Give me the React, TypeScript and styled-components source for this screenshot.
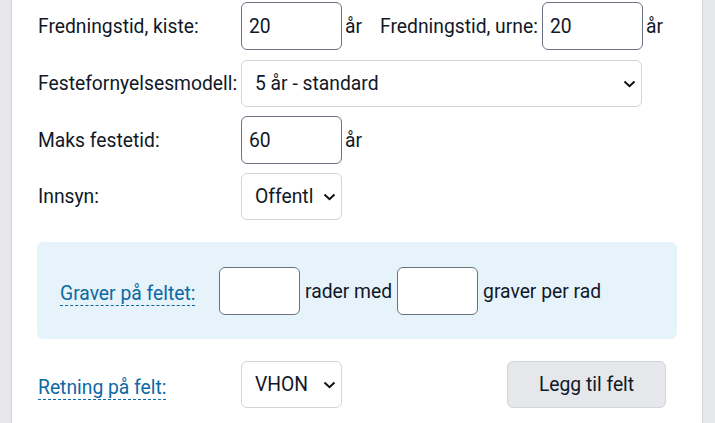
import React from 'react';
import styled, { createGlobalStyle } from 'styled-components';

const GlobalStyle = createGlobalStyle`
  html, body {
    margin: 0;
    padding: 0;
    background: #e5e7eb;
    font-family: Roboto, "Liberation Sans", Arial, sans-serif;
    color: #111827;
  }
`;

const Panel = styled.div`
  margin-left: 11px;
  width: 692px;
  min-height: 423px;
  box-sizing: border-box;
  background: #ffffff;
  border-left: 1px solid #d1d5db;
  border-right: 1px solid #d1d5db;
  padding: 2px 0 0 26px;
  font-size: 19.3px;
`;

const Row = styled.div<{ $gap?: number }>`
  display: flex;
  align-items: center;
  margin-bottom: ${(p) => p.$gap ?? 9}px;
`;

const Label = styled.label<{ $width?: number }>`
  width: ${(p) => p.$width ?? 203}px;
  flex-shrink: 0;
  white-space: nowrap;
`;

const HelpLabel = styled.span`
  color: #0b69a3;
  border-bottom: 1px dashed #0b69a3;
  line-height: 1.2;
  white-space: nowrap;
`;

const HelpCell = styled.div<{ $width: number }>`
  width: ${(p) => p.$width}px;
  flex-shrink: 0;
  padding-top: 6px;
`;

const Input = styled.input<{ $width?: number }>`
  width: ${(p) => p.$width ?? 101}px;
  height: 48px;
  box-sizing: border-box;
  border: 1px solid #6b7280;
  border-radius: 6px;
  padding: 0 7px;
  font: inherit;
  color: #111827;
  background: #fff;
  outline: none;
`;

const Unit = styled.span<{ $after?: number }>`
  margin-left: 3px;
  margin-right: ${(p) => p.$after ?? 0}px;
`;

const SelectWrap = styled.div<{ $width: number }>`
  position: relative;
  width: ${(p) => p.$width}px;
  height: 47px;
`;

const Select = styled.select`
  width: 100%;
  height: 100%;
  box-sizing: border-box;
  appearance: none;
  border: 1px solid #d1d5db;
  border-radius: 6px;
  padding: 0 27px 0 13px;
  font: inherit;
  color: #111827;
  background: #fff;
  outline: none;
`;

const Chevron = styled.svg`
  position: absolute;
  right: 6px;
  top: 20px;
  pointer-events: none;
`;

const InfoBox = styled.div`
  margin: 22px 25px 22px -1px;
  background: #e6f3fa;
  border-radius: 6px;
  padding: 25px 23px 24px 23px;
  display: flex;
  align-items: center;
`;

const Text = styled.span`
  margin: 0 5px;
  white-space: nowrap;
`;

const Button = styled.button`
  margin-left: auto;
  margin-right: 36px;
  width: 159px;
  height: 47px;
  border: 1px solid #d1d5db;
  border-radius: 6px;
  background: #e5e7eb;
  color: #111827;
  font: inherit;
  cursor: pointer;
`;

const Dropdown: React.FC<{ width: number; value: string; options: string[] }> = ({
  width,
  value,
  options,
}) => (
  <SelectWrap $width={width}>
    <Select defaultValue={value}>
      {options.map((o) => (
        <option key={o}>{o}</option>
      ))}
    </Select>
    <Chevron width="13" height="8" viewBox="0 0 13 8">
      <path d="M1.5 1.5 L6.5 6.2 L11.5 1.5" fill="none" stroke="#111" strokeWidth="2" />
    </Chevron>
  </SelectWrap>
);

const App: React.FC = () => {
  return (
    <>
      <GlobalStyle />
      <Panel>
        <Row $gap={10}>
          <Label>Fredningstid, kiste:</Label>
          <Input defaultValue="20" />
          <Unit $after={18}>år</Unit>
          <Label $width={162}>Fredningstid, urne:</Label>
          <Input defaultValue="20" />
          <Unit>år</Unit>
        </Row>
        <Row>
          <Label>Festefornyelsesmodell:</Label>
          <Dropdown width={401} value="5 år - standard" options={['5 år - standard', '10 år', '20 år']} />
        </Row>
        <Row>
          <Label>Maks festetid:</Label>
          <Input defaultValue="60" />
          <Unit>år</Unit>
        </Row>
        <Row $gap={0}>
          <Label>Innsyn:</Label>
          <Dropdown width={101} value="Offentlig" options={['Offentlig', 'Privat']} />
        </Row>
        <InfoBox>
          <HelpCell $width={159}>
            <HelpLabel>Graver på feltet:</HelpLabel>
          </HelpCell>
          <Input $width={81} />
          <Text>rader med</Text>
          <Input $width={81} />
          <Text>graver per rad</Text>
        </InfoBox>
        <Row>
          <HelpCell $width={203}>
            <HelpLabel>Retning på felt:</HelpLabel>
          </HelpCell>
          <Dropdown width={101} value="VHON" options={['VHON', 'HVON', 'VHNO']} />
          <Button>Legg til felt</Button>
        </Row>
      </Panel>
    </>
  );
};

export default App;
